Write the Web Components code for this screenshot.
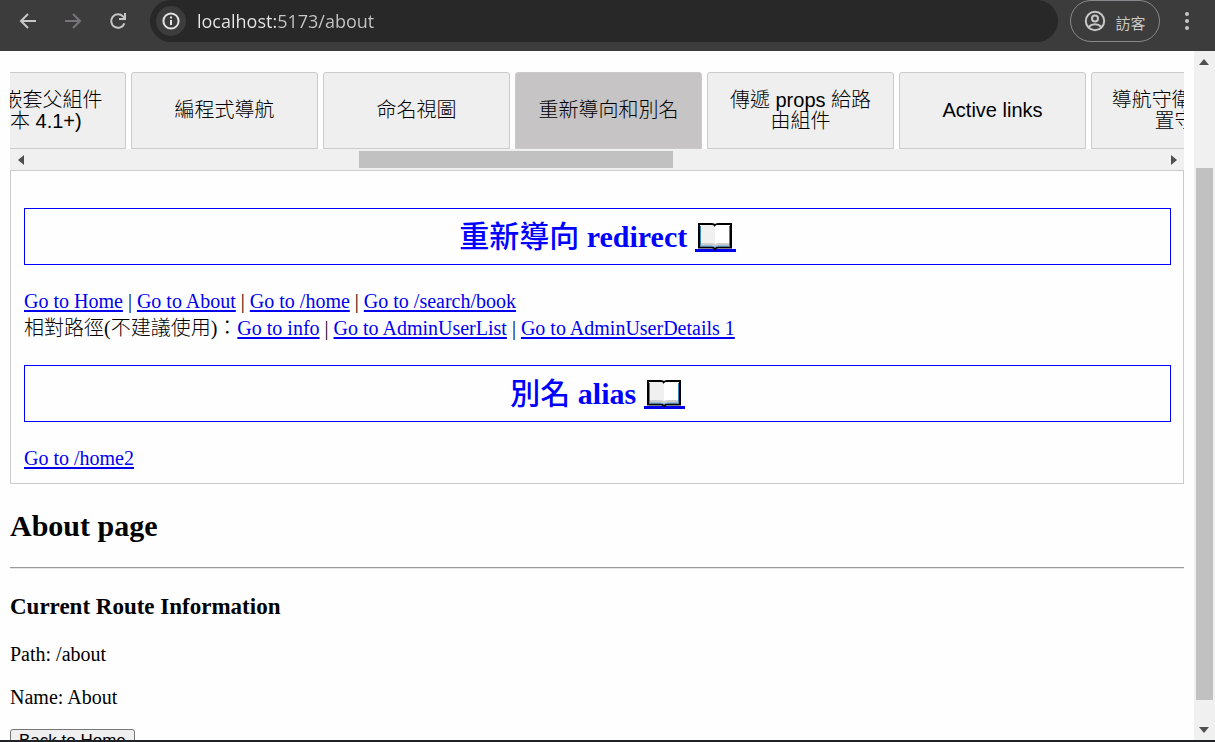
<!DOCTYPE html>
<html lang="zh-Hant">
<head>
<meta charset="utf-8">
<title>Vue Router demo</title>
<style>
body { margin: 0; font: 300 20px/23px "Liberation Serif", "Noto Sans CJK TC", serif; color: #000; background: #fefefe; }
</style>
</head>
<body>
<demo-app></demo-app>
<script>
function define(name, html, init) {
  const template = document.createElement('template');
  template.innerHTML = html.trim();
  customElements.define(name, class extends HTMLElement {
    constructor() {
      super();
      this.attachShadow({ mode: 'open' }).append(template.content.cloneNode(true));
    }
    connectedCallback() { if (init) init.call(this, this.shadowRoot); }
  });
}

define('browser-bar', `
<style>
:host { display: flex; align-items: flex-start; height: 51px; background: #3c3c3c; box-sizing: border-box; padding: 0 18px 0 10px; flex: none; }
button { border: 0; background: none; padding: 0; margin: 0; color: #c7c7c7; display: flex; align-items: center; justify-content: center; }
.tool { width: 36px; height: 42px; margin-right: 9px; }
.tool.off { color: #77747c; }
.address { flex: 1; display: flex; align-items: center; height: 42px; margin-left: 5px; padding-left: 6px; border-radius: 21px; background: #282828; }
.info { width: 30px; height: 30px; border-radius: 50%; background: #3c3c3c; color: #e3e3e3; }
input { flex: 1; min-width: 0; border: 0; outline: 0; padding: 0; margin-left: 11px; height: 36px; font: 18px/36px "Open Sans", sans-serif; color: transparent; background: linear-gradient(90deg, #e8e8e8 80px, #c7c7c7 80px); -webkit-background-clip: text; background-clip: text; }
.guest { box-sizing: border-box; width: 90px; height: 42px; margin-left: 12px; border: 1px solid #8a888c; border-radius: 21px; gap: 9px; font: 15px/20px "Noto Sans CJK TC", sans-serif; }
.guest span { padding-top: 3px; }
.more { width: 20px; height: 42px; margin-left: 17px; }
</style>
<button class="tool" aria-label="Back"><svg width="18" height="18" viewBox="0 0 18 18" fill="none" stroke="currentColor" stroke-width="2"><path d="M17 9H3M9 2L2 9l7 7"/></svg></button>
<button class="tool off" aria-label="Forward"><svg width="18" height="18" viewBox="0 0 18 18" fill="none" stroke="currentColor" stroke-width="2"><path d="M1 9h14M9 2l7 7-7 7"/></svg></button>
<button class="tool" aria-label="Reload"><svg width="18" height="18" viewBox="0 0 18 18" fill="none" stroke="currentColor" stroke-width="2"><path d="M15.4 11.4A6.8 6.8 0 1 1 14 4.4L16 6.4M16 1v6h-6"/></svg></button>
<div class="address">
  <button class="info" aria-label="Site information"><svg width="18" height="18" viewBox="0 0 18 18" fill="none" stroke="currentColor" stroke-width="2"><circle cx="9" cy="9" r="7.6"/><path d="M9 8v5M9 4.6v2"/></svg></button>
  <input aria-label="Address" value="localhost:5173/about">
</div>
<button class="guest"><svg width="22" height="22" viewBox="0 0 22 22" fill="none" stroke="currentColor" stroke-width="2"><circle cx="11" cy="11" r="9.2"/><circle cx="11" cy="8.6" r="3"/><path d="M4.6 17c3.400-3.600 9.400-3.600 12.800 0"/></svg><span>訪客</span></button>
<button class="more" aria-label="Menu"><svg width="6" height="20" viewBox="0 0 6 20" fill="currentColor"><circle cx="3" cy="3" r="2"/><circle cx="3" cy="10" r="2"/><circle cx="3" cy="17" r="2"/></svg></button>
`);

define('scroll-bar', `
<style>
:host { display: flex; align-items: center; background: #f0f0f0; flex: none; }
:host([vertical]) { flex-direction: column; width: 21px; }
:host(:not([vertical])) { height: 21px; }
.arrow { flex: none; width: 21px; height: 21px; display: grid; place-items: center; }
:host([vertical]) .arrow { transform: rotate(90deg); }
.track { flex: 1; align-self: stretch; display: flex; padding: 2px 0; }
:host([vertical]) .track { flex-direction: column; padding: 0 2px; }
.track i { display: block; }
.thumb { background: #c1c1c1; }
</style>
<span class="arrow"><svg width="6" height="10" viewBox="0 0 6 10"><path fill="#505050" d="M6 0v10L0 5z"/></svg></span>
<div class="track"><i class="before"></i><i class="thumb"></i><i class="after"></i></div>
<span class="arrow"><svg width="6" height="10" viewBox="0 0 6 10"><path fill="#505050" d="M0 0v10l6-5z"/></svg></span>
`, function (root) {
  const parts = this.getAttribute('parts').split(' ');
  ['before', 'thumb', 'after'].forEach((name, i) => {
    root.querySelector('.' + name).style.flex = parts[i] + ' 1 0';
  });
});

define('tab-button', `
<style>
:host { display: block; flex: 0 0 187px; }
button { width: 100%; height: 77px; box-sizing: border-box; margin: 0; padding: 0 19px; border: 1px solid #cbcbcb; border-radius: 3px 3px 0 0; background: #efefef; color: #000; font: 300 20px/21px "Liberation Sans", "Noto Sans CJK TC", sans-serif; }
:host([active]) button { background: #c6c4c4; }
</style>
<button><slot></slot></button>
`);

define('tab-strip', `
<style>
:host { display: block; margin-top: 21px; }
.view { overflow: hidden; }
nav { display: flex; gap: 5px; margin-left: -71px; }
</style>
<div class="view"><nav><slot></slot></nav></div>
<scroll-bar parts="328 314 490"></scroll-bar>
`);

define('doc-heading', `
<style>
:host { display: block; }
h2 { margin: 25px 0; padding: 8px; border: 1px solid #00f; text-align: center; color: #00f; font-size: 30px; line-height: 39px; font-weight: bold; }
::slotted(span) { font-weight: 500; }
a { display: inline-block; vertical-align: -5px; height: 30px; width: 41px; border-bottom: 3px solid #00e; box-sizing: border-box; }
svg { display: block; margin: 0 auto; overflow: visible; }
</style>
<h2><slot></slot> <a href="#" aria-label="Documentation"><svg width="36" height="28" viewBox="0 0 36 28"><path d="M2 2h13q2 0 3 1.500 1-1.500 3-1.500h13v23.500H21q-2 0-3 1.500-1-1.500-3-1.500H2z" fill="#f0f0f0" stroke="#000" stroke-width="2"/><path d="M18 4q1-1 3-1h11v19H21q-2 0-3 1z" fill="#fff"/><path d="M4 22h10q3 0 4 1.500Q19 22 22 22h10" fill="none" stroke="#ccc" stroke-width="2"/><path d="M3.500 4v20H14q3 0 4 1.500 1-1.500 4-1.500h10.500V4" fill="none" stroke="#3b87c0"/></svg></a></h2>
`);

define('nav-link', `
<style>
a { color: #00e; text-decoration: underline; text-decoration-thickness: 2px; text-underline-offset: 2px; }
</style><a href="#"><slot></slot></a>
`);

define('route-panel', `
<style>
:host { display: block; border: 1px solid #cbcbcb; padding: 12px 12px 13px 13px; }
:host::before, :host::after { content: ""; display: table; }
</style>
<slot></slot>
`);

define('route-info', `
<style>
:host { display: block; }
h1 { font-size: 30px; line-height: 34px; margin: 25px 0 24px; }
hr { margin: 0; border: 0; border-top: 1px solid #9a9a9a; border-bottom: 1px solid #e6e6e6; }
h3 { font-size: 23px; line-height: 27px; margin: 24px 0 23px; }
p { margin: 20px 0; }
button { display: block; margin: 0; padding: 1px 8px; border: 1px solid #767676; border-radius: 3px; background: #efefef; color: #000; font: 17px/20px "Liberation Sans", sans-serif; }
</style>
<h1>About page</h1>
<hr>
<h3>Current Route Information</h3>
<p>Path: /about</p>
<p>Name: About</p>
<button>Back to Home</button>
`);

define('demo-app', `
<style>
:host { display: flex; flex-direction: column; height: 100vh; box-sizing: border-box; border-bottom: 2px solid #202228; overflow: hidden; }
.page { flex: 1; min-height: 0; display: flex; }
main { flex: 1; min-width: 0; overflow: hidden; padding: 0 10px; }
.row { display: block; }
.mixed { padding-top: 4px; }
</style>
<browser-bar></browser-bar>
<div class="page">
  <main>
    <tab-strip>
      <tab-button>忽略嵌套父組件(版本 4.1+)</tab-button>
      <tab-button>編程式導航</tab-button>
      <tab-button>命名視圖</tab-button>
      <tab-button active>重新導向和別名</tab-button>
      <tab-button>傳遞 props 給路由組件</tab-button>
      <tab-button>Active links</tab-button>
      <tab-button>導航守衛 全域前置守衛</tab-button>
    </tab-strip>
    <route-panel>
      <doc-heading><span>重新導向</span> redirect</doc-heading>
      <div class="row"><nav-link>Go to Home</nav-link> | <nav-link>Go to About</nav-link> | <nav-link>Go to /home</nav-link> | <nav-link>Go to /search/book</nav-link></div>
      <div class="row mixed">相對路徑(不建議使用)：<nav-link>Go to info</nav-link> | <nav-link>Go to AdminUserList</nav-link> | <nav-link>Go to AdminUserDetails 1</nav-link></div>
      <doc-heading><span>別名</span> alias</doc-heading>
      <div class="row"><nav-link>Go to /home2</nav-link></div>
    </route-panel>
    <route-info></route-info>
  </main>
  <scroll-bar vertical parts="96 532 19"></scroll-bar>
</div>
`);
</script>
</body>
</html>
